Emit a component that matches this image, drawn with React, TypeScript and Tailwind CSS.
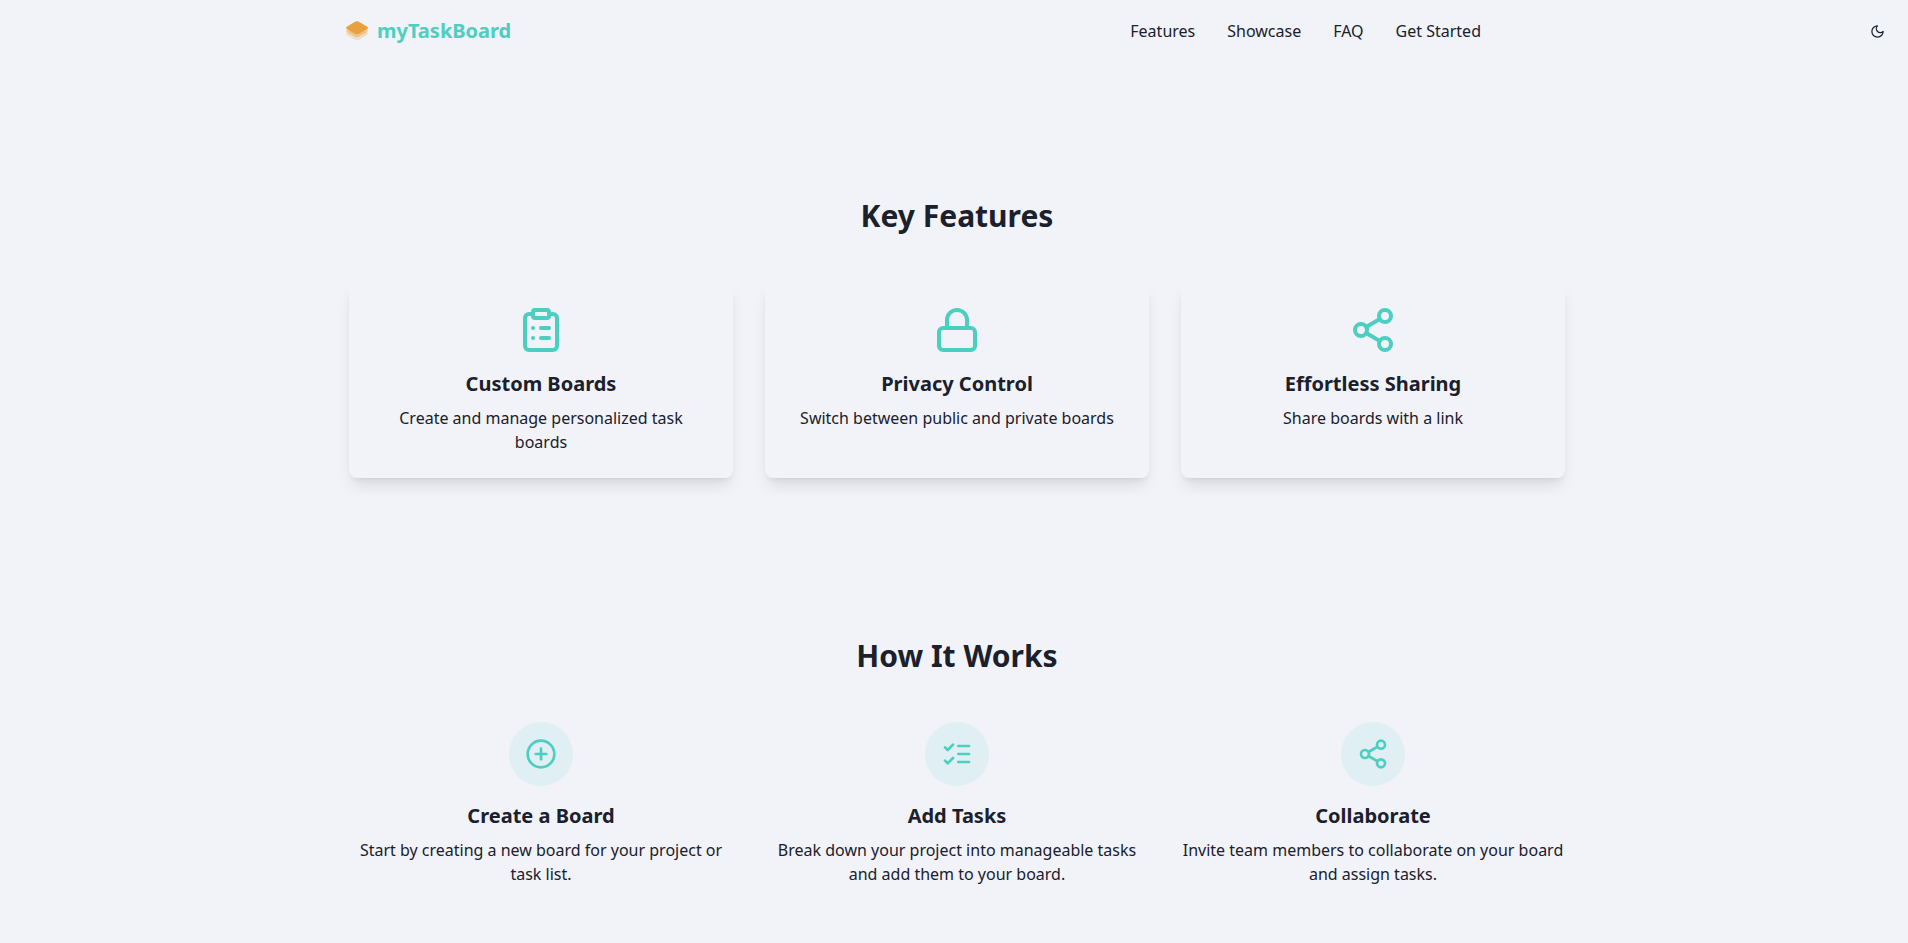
import type { ComponentType, SVGProps } from "react";
import { ClipboardList, Lock, Share2, CirclePlus } from "lucide-react";

type IconType = ComponentType<SVGProps<SVGSVGElement>>;

const strokeProps = {
  viewBox: "0 0 24 24",
  fill: "none",
  stroke: "currentColor",
  strokeWidth: 2,
  strokeLinecap: "round",
  strokeLinejoin: "round",
} as const;

function CheckList(props: SVGProps<SVGSVGElement>) {
  return (
    <svg {...strokeProps} {...props}>
      <path d="m3 17 2 2 4-4" />
      <path d="m3 7 2 2 4-4" />
      <path d="M13 6h8" />
      <path d="M13 12h8" />
      <path d="M13 18h8" />
    </svg>
  );
}

function Crescent(props: SVGProps<SVGSVGElement>) {
  return (
    <svg {...strokeProps} {...props}>
      <path d="M12 3a6 6 0 0 0 9 9 9 9 0 1 1-9-9Z" />
    </svg>
  );
}

function Logo() {
  const layer = "M1.7 7.7 9.6 2.9q2.400-1.400 4.800 0l7.900 4.800q1.500 1.200 0 2.400l-7.900 4.500q-2.400 1.300-4.800 0L1.700 10.100q-1.500-1.200 0-2.400z";
  return (
    <svg viewBox="0 0 24 24" className="h-6 w-6" fill="#e9a23b">
      <path d={layer} opacity="0.25" transform="translate(0 5.800)" />
      <path d={layer} opacity="0.45" transform="translate(0 3)" />
      <path d={layer} />
    </svg>
  );
}

const features: { icon: IconType; title: string; text: string }[] = [
  { icon: ClipboardList, title: "Custom Boards", text: "Create and manage personalized task boards" },
  { icon: Lock, title: "Privacy Control", text: "Switch between public and private boards" },
  { icon: Share2, title: "Effortless Sharing", text: "Share boards with a link" },
];

const steps: { icon: IconType; title: string; text: string }[] = [
  { icon: CirclePlus, title: "Create a Board", text: "Start by creating a new board for your project or task list." },
  { icon: CheckList, title: "Add Tasks", text: "Break down your project into manageable tasks and add them to your board." },
  { icon: Share2, title: "Collaborate", text: "Invite team members to collaborate on your board and assign tasks." },
];

export default function App() {
  return (
    <div className="h-[943px] overflow-hidden bg-[#f1f3f8] font-['Noto_Sans',sans-serif] text-[#1a202c]">
      <header className="flex h-[62px] items-center pl-[345px] pr-[23.5px]">
        <a className="flex items-center gap-2">
          <Logo />
          <span className="text-xl font-bold text-[#4ccfc0]">myTaskBoard</span>
        </a>
        <nav className="ml-auto mr-[388.5px] flex gap-8">
          <a>Features</a>
          <a>Showcase</a>
          <a>FAQ</a>
          <a>Get Started</a>
        </nav>
        <Crescent className="h-[15px] w-[15px]" />
      </header>
      <main className="ml-[349px] w-[1216px]">
        <section className="pt-34">
          <h2 className="text-center text-3xl font-bold">Key Features</h2>
          <div className="mt-12 grid grid-cols-3 gap-8">
            {features.map(({ icon: Icon, title, text }) => (
              <div key={title} className="flex flex-col items-center rounded-lg p-6 text-center shadow-lg">
                <Icon className="mb-4 h-12 w-12 text-[#4ccfc0]" />
                <h3 className="mb-2 text-xl font-bold">{title}</h3>
                <p>{text}</p>
              </div>
            ))}
          </div>
        </section>
        <section className="pt-40">
          <h2 className="text-center text-3xl font-bold">How It Works</h2>
          <div className="mt-12 grid grid-cols-3 gap-8">
            {steps.map(({ icon: Icon, title, text }) => (
              <div key={title} className="flex flex-col items-center text-center">
                <div className="mb-4 flex h-16 w-16 items-center justify-center rounded-full bg-[#dfeff4]">
                  <Icon className="h-8 w-8 text-[#4ccfc0]" />
                </div>
                <h3 className="mb-2 text-xl font-bold">{title}</h3>
                <p>{text}</p>
              </div>
            ))}
          </div>
        </section>
      </main>
    </div>
  );
}
